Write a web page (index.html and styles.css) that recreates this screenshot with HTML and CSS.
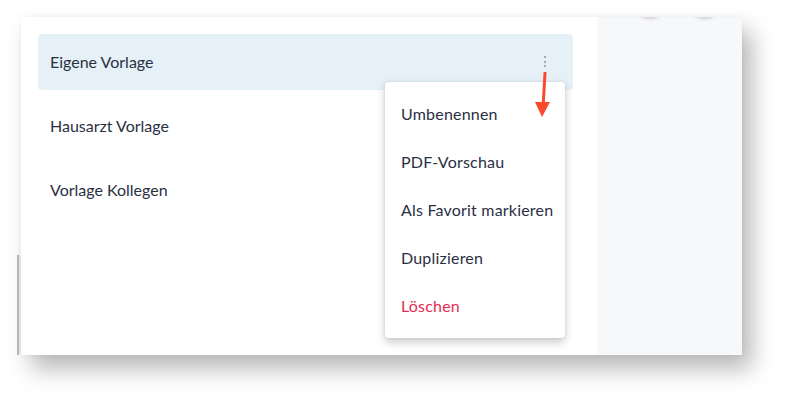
FILE: index.html
```html
<!DOCTYPE html>
<html lang="de">
<head>
<meta charset="utf-8">
<link rel="stylesheet" href="styles.css">
</head>
<body>
<div class="stage">
  <div class="edge"></div>
  <div class="frame">
    <main class="main">
      <ul class="list">
        <li class="row active">
          <span class="label">Eigene Vorlage</span>
          <span class="kebab"><i></i><i></i><i></i></span>
          <div class="menu">
            <div class="item">Umbenennen</div>
            <div class="item">PDF-Vorschau</div>
            <div class="item">Als Favorit markieren</div>
            <div class="item">Duplizieren</div>
            <div class="item danger">Löschen</div>
          </div>
          <svg class="arrow" width="20" height="50" viewBox="0 0 20 50">
            <line x1="11" y1="1" x2="9.2" y2="33" stroke="#fb4a2b" stroke-width="3" stroke-linecap="round"/>
            <polygon points="1,30 16,30 8,45" fill="#fb4a2b"/>
          </svg>
        </li>
        <li class="row"><span class="label">Hausarzt Vorlage</span></li>
        <li class="row"><span class="label">Vorlage Kollegen</span></li>
      </ul>
    </main>
    <aside class="side">
      <span class="avatar a1"></span>
      <span class="avatar a2"></span>
    </aside>
  </div>
</div>
</body>
</html>
```
FILE: styles.css
```css
* { box-sizing: border-box; }
html, body { margin: 0; padding: 0; background: #fff; }
body {
  font-family: Lato, "Open Sans", sans-serif;
  width: 790px;
  height: 403px;
  overflow: hidden;
}
.stage {
  display: flex;
  padding: 17px 0 0 17px;
}
.edge {
  align-self: flex-end;
  width: 4px;
  height: 100px;
  border-left: 2px solid #bdbdbd;
  background: #f4f4f4;
}
.frame {
  display: flex;
  width: 721px;
  height: 338px;
  background: #fff;
  box-shadow: 10px 14px 22px rgba(0,0,0,0.28), 0 0 6px rgba(0,0,0,0.05);
}
.main {
  width: 576px;
  padding: 17px 24px 0 17px;
  background: #fff;
}
.list {
  list-style: none;
  margin: 0;
  padding: 0;
  display: flex;
  flex-direction: column;
  gap: 8px;
}
.row {
  position: relative;
  height: 56px;
  display: flex;
  align-items: center;
  padding: 0 12px 2px;
  border-radius: 4px;
  font-size: 16px;
  color: #2a3043;
}
.row.active { background: #e6f0f7; }
.label { flex: 1; white-space: nowrap; }
.kebab {
  display: flex;
  flex-direction: column;
  gap: 2.5px;
  margin-right: 15px;
  margin-top: 1px;
}
.kebab i {
  display: block;
  width: 2px;
  height: 2px;
  border-radius: 1px;
  background: #8b96a2;
}
.menu {
  position: absolute;
  top: 48px;
  right: 8px;
  width: 180px;
  padding: 8px 0;
  background: #fff;
  border-radius: 4px;
  box-shadow: 0 4px 10px rgba(0,0,0,0.22), 0 0 3px rgba(0,0,0,0.08);
  z-index: 2;
}
.item {
  height: 48px;
  display: flex;
  align-items: center;
  padding: 0 8px 2px 16px;
  font-size: 16px;
  letter-spacing: 0.2px;
  white-space: nowrap;
  color: #2a3043;
}
.item.danger { color: #e42c54; }
.arrow {
  position: absolute;
  left: 496px;
  top: 38px;
  z-index: 3;
}
.side {
  position: relative;
  flex: 1;
  background: #f7f8fa;
  overflow: hidden;
}
.avatar {
  position: absolute;
  top: -34px;
  width: 34px;
  height: 34px;
  border-radius: 50%;
  background: #f7f8fa;
  box-shadow: 0 1px 4px rgba(0,0,0,0.25);
}
.a1 { left: 36px; }
.a2 { left: 91px; }
```
